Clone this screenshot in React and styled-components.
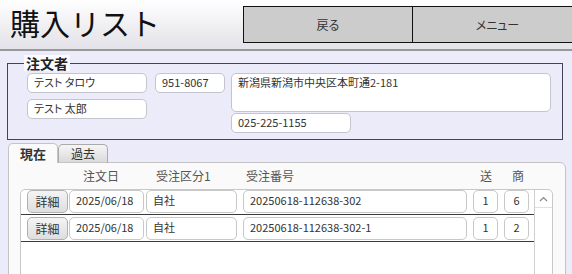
import styled, { createGlobalStyle } from "styled-components";

const GlobalStyle = createGlobalStyle`
  html, body {
    margin: 0;
    padding: 0;
    background: #ebebfa;
    overflow: hidden;
  }
  body {
    font-family: "Noto Sans CJK JP", "Noto Sans", sans-serif;
    font-feature-settings: "palt";
    color: #222;
  }
`;

const Page = styled.div`
  width: 572px;
  height: 274px;
  overflow: hidden;
`;

// header
const Header = styled.div`
  display: flex;
  align-items: flex-start;
  height: 49px;
  background: linear-gradient(#ffffff, #e2e2e8);
  border-bottom: 2px solid #999;
`;

const Title = styled.h1`
  flex: 0 0 233px;
  margin: 0 0 0 10px;
  font-size: 30px;
  font-weight: 400;
  font-feature-settings: normal;
  line-height: 44px;
  color: #111;
`;

const NavButton = styled.div`
  flex: 0 0 170px;
  height: 37px;
  margin-top: 6px;
  display: flex;
  align-items: center;
  justify-content: center;
  background: #cccccc;
  border: 1px solid #111;
  border-left: ${(p) => (p.$first ? "1px solid #111" : "none")};
  box-sizing: border-box;
  font-size: 12px;
  color: #333;
`;

const Body = styled.div`
  padding: 4px 0 0 7px;
`;

// 注文者
const Orderer = styled.fieldset`
  width: 556px;
  box-sizing: border-box;
  margin: 0;
  padding: 0 0 6px 16px;
  border: 1px solid #444455;
`;

const Legend = styled.legend`
  padding: 0 2px;
  background: #fafaff;
  font-size: 14px;
  font-weight: 700;
  line-height: 16px;
  color: #222;
`;

const FieldArea = styled.div`
  display: flex;
  align-items: flex-start;
  margin: 2px 0 0 3px;
`;

const Col = styled.div`
  display: flex;
  flex-direction: column;
  gap: ${(p) => p.$gap || 0}px;
  margin-left: ${(p) => p.$left || 0}px;
`;

const Field = styled.div`
  width: ${(p) => p.$w}px;
  height: ${(p) => p.$h || 20}px;
  box-sizing: border-box;
  padding: 0 6px;
  background: #fff;
  border: 1px solid #c4c4cc;
  border-radius: 5px;
  font-size: 11px;
  line-height: 17px;
  color: #333;
  white-space: nowrap;
  overflow: hidden;
`;

// tabs
const Tabs = styled.div`
  display: flex;
  margin: 3px 0 0 1px;
  position: relative;
  z-index: 1;
`;

const Tab = styled.div`
  width: 50px;
  height: ${(p) => (p.$active ? 20 : 19)}px;
  margin-top: ${(p) => (p.$active ? 0 : 1)}px;
  box-sizing: border-box;
  display: flex;
  align-items: center;
  justify-content: center;
  border: 1px solid ${(p) => (p.$active ? "#c4c4c4" : "#aaa")};
  border-bottom: ${(p) => (p.$active ? "none" : "1px solid #c4c4c4")};
  border-radius: 5px 5px 0 0;
  background: ${(p) =>
    p.$active ? "#fafafa" : "linear-gradient(#f6f6f6, #dadada)"};
  font-size: ${(p) => (p.$active ? 13 : 12)}px;
  font-weight: ${(p) => (p.$active ? 700 : 400)};
  color: #333;
`;

const Panel = styled.div`
  width: 558px;
  height: 140px;
  box-sizing: border-box;
  margin: -1px 0 0 1px;
  background: #fafafa;
  border: 1px solid #c4c4c4;
  border-radius: 0 6px 0 0;
`;

const HeadRow = styled.div`
  display: flex;
  height: 26px;
  line-height: 26px;
  font-size: 12px;
  color: #555;
`;

const HeadLabel = styled.span`
  flex: 0 0 ${(p) => p.$w}px;
  margin-left: ${(p) => p.$left || 0}px;
`;

const List = styled.div`
  display: flex;
  width: 533px;
  height: 120px;
  box-sizing: border-box;
  margin-left: 11px;
  background: #fff;
  border: 1px solid #c8c8c8;
  border-radius: 5px 5px 0 0;
`;

const Rows = styled.div`
  flex: 1;
`;

const Row = styled.div`
  display: flex;
  align-items: center;
  padding: ${(p) => (p.$first ? "0" : "2px")} 0 1px 6px;
  border-bottom: 1px solid #3a3a3a;
`;

const Cell = styled.div`
  flex: 0 0 ${(p) => p.$w}px;
  min-width: 0;
  height: 23px;
  margin-left: ${(p) => p.$left || 0}px;
  box-sizing: border-box;
  padding: 0 ${(p) => (p.$center ? 0 : 6)}px;
  background: #fff;
  border: 1px solid #c8c8c8;
  border-radius: 5px;
  font-size: 11px;
  line-height: 19px;
  color: #333;
  text-align: ${(p) => (p.$center ? "center" : "left")};
  white-space: nowrap;
  overflow: hidden;
`;

const DetailButton = styled.div`
  flex: 0 0 41px;
  height: 23px;
  box-sizing: border-box;
  display: flex;
  align-items: center;
  justify-content: center;
  background: linear-gradient(#f4f4f4, #dedede);
  border: 1px solid #b0b0b0;
  border-radius: 5px;
  font-size: 12px;
  color: #333;
`;

const Scrollbar = styled.div`
  flex: 0 0 17px;
  border-left: 1px solid #d0d0d0;
  border-radius: 0 5px 0 0;
`;

const ScrollUp = styled.div`
  height: 17px;
  display: flex;
  align-items: center;
  justify-content: center;
  border-bottom: 1px solid #e0e0e0;
`;

const orders = [
  { date: "2025/06/18", kubun: "自社", no: "20250618-112638-302", okuri: "1", sho: "6" },
  { date: "2025/06/18", kubun: "自社", no: "20250618-112638-302-1", okuri: "1", sho: "2" },
];

function App() {
  return (
    <Page>
      <GlobalStyle />
      <Header>
        <Title>購入リスト</Title>
        <NavButton $first>戻る</NavButton>
        <NavButton>メニュー</NavButton>
      </Header>
      <Body>
        <Orderer>
          <Legend>注文者</Legend>
          <FieldArea>
            <Col $gap={6}>
              <Field $w={120}>テスト タロウ</Field>
              <Field $w={120}>テスト 太郎</Field>
            </Col>
            <Col $left={8}>
              <Field $w={70}>951-8067</Field>
            </Col>
            <Col $left={6} $gap={1}>
              <Field $w={320} $h={39}>新潟県新潟市中央区本町通2-181</Field>
              <Field $w={120}>025-225-1155</Field>
            </Col>
          </FieldArea>
        </Orderer>

        <Tabs>
          <Tab $active>現在</Tab>
          <Tab>過去</Tab>
        </Tabs>
        <Panel>
          <HeadRow>
            <HeadLabel $left={74} $w={73}>注文日</HeadLabel>
            <HeadLabel $w={90}>受注区分1</HeadLabel>
            <HeadLabel $w={234}>受注番号</HeadLabel>
            <HeadLabel $w={32}>送</HeadLabel>
            <HeadLabel $w={20}>商</HeadLabel>
          </HeadRow>
          <List>
            <Rows>
              {orders.map((o, i) => (
                <Row key={i} $first={i === 0}>
                  <DetailButton>詳細</DetailButton>
                  <Cell $w={75} $left={1}>{o.date}</Cell>
                  <Cell $w={91} $left={2}>{o.kubun}</Cell>
                  <Cell $w={224} $left={6}>{o.no}</Cell>
                  <Cell $w={25} $left={6} $center>{o.okuri}</Cell>
                  <Cell $w={25} $left={6} $center>{o.sho}</Cell>
                </Row>
              ))}
            </Rows>
            <Scrollbar>
              <ScrollUp>
                <svg width="9" height="6" viewBox="0 0 9 6">
                  <path d="M1 5 L4.5 1.5 L8 5" fill="none" stroke="#888" strokeWidth="1.2" />
                </svg>
              </ScrollUp>
            </Scrollbar>
          </List>
        </Panel>
      </Body>
    </Page>
  );
}

export default App;
